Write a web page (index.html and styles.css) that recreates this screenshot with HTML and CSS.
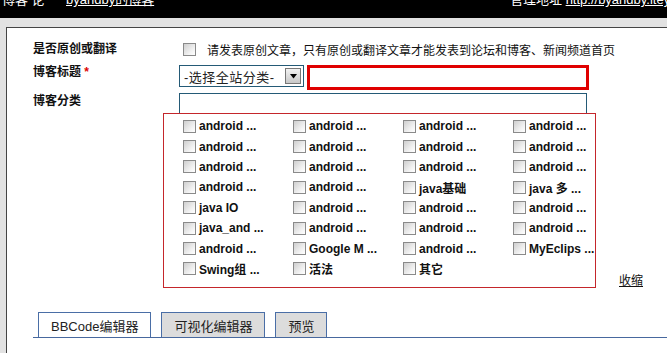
FILE: index.html
```html
<!DOCTYPE html>
<html lang="zh-CN">
<head>
  <meta charset="UTF-8" />
  <meta name="viewport" content="width=device-width, initial-scale=1.0"/>
  <title>发表博客 | ITeye</title>
  <link rel="stylesheet" href="styles.css">
</head>
<body>

<div class="topbar">
  <div class="topbar-inner">
    <div class="top-left">
      <span class="top-site">博客 论</span>
      <a class="top-link" href="#">byandby的博客</a>
    </div>
    <span class="top-admin">管理地址 <a href="#">http://byandby.iteye.com</a></span>
  </div>
</div>

<div class="page">
  <div class="content">

    <div class="row row-original">
      <div class="label">是否原创或翻译</div>
      <input type="checkbox" class="cb" />
      <span class="hint">请发表原创文章，只有原创或翻译文章才能发表到论坛和博客、新闻频道首页</span>
    </div>

    <div class="row row-title">
      <div class="label">博客标题 <span class="req">*</span></div>
      <div class="select">
        <span class="select-text">-选择全站分类-</span>
        <span class="select-btn"><svg width="9" height="5" viewBox="0 0 9 5"><path d="M1 0H8L4.5 4.5Z" fill="#000"/></svg></span>
      </div>
      <input type="text" class="title-input" />
    </div>

    <div class="row row-cat">
      <div class="label">博客分类</div>
      <input type="text" class="cat-input" />
    </div>

    <div class="cat-wrap">
      <div class="cat-box" id="cat-box"></div>
      <a class="collapse" href="#">收缩</a>
    </div>

    <div class="tabs">
      <span class="tab active">BBCode编辑器</span>
      <span class="tab">可视化编辑器</span>
      <span class="tab">预览</span>
    </div>

    <div class="toolbar" id="toolbar"></div>

  </div>
</div>

<script>
  const cats = [
    'android ...', 'android ...', 'android ...', 'android ...',
    'android ...', 'android ...', 'android ...', 'android ...',
    'android ...', 'android ...', 'android ...', 'android ...',
    'android ...', 'android ...', 'java基础', 'java 多 ...',
    'java IO', 'android ...', 'android ...', 'android ...',
    'java_and ...', 'android ...', 'android ...', 'android ...',
    'android ...', 'Google M ...', 'android ...', 'MyEclips ...',
    'Swing组 ...', '活法', '其它'
  ];

  const box = document.getElementById('cat-box');
  cats.forEach(c => {
    box.innerHTML += `
      <label class="cat-item"><input type="checkbox" class="cb" /><span>${c}</span></label>`;
  });

  const widths = [23, 27, 32, 57, 51, 43, 44, 47, 53, 54];
  const bar = document.getElementById('toolbar');
  widths.forEach(w => {
    bar.innerHTML += `<span class="tool" style="width:${w}px"></span>`;
  });
</script>

</body>
</html>
```

FILE: styles.css
```css
body {
  margin: 0;
  font-family: "Liberation Sans", "Noto Sans CJK SC", sans-serif;
  font-size: 12px;
  color: #222;
  background: #e2e2e2;
  overflow: hidden;
}
.topbar {
  height: 18px;
  background: #000;
  overflow: hidden;
  color: #fff;
}
.topbar-inner {
  display: flex;
  align-items: baseline;
  margin-top: -8px;
  line-height: 16px;
  font-size: 13px;
  white-space: nowrap;
}
.topbar a {
  color: #fff;
}
.top-left {
  display: flex;
  width: 510px;
  flex-shrink: 0;
}
.top-site {
  width: 64px;
  padding-left: 2px;
}
.top-admin {
  flex-shrink: 0;
}
.page {
  padding: 9px 0 0 6px;
}
.content {
  background: #fff;
  border-top: 1px solid #444;
  border-left: 1px solid #444;
  padding: 12px 0 0 26px;
  height: 400px;
}
.row {
  display: flex;
  align-items: flex-start;
}
.label {
  width: 146px;
  flex-shrink: 0;
  font-weight: bold;
  line-height: 16px;
  color: #111;
}
.req {
  color: #d00;
}
.cb {
  appearance: none;
  -webkit-appearance: none;
  width: 13px;
  height: 13px;
  margin: 0;
  border: 1px solid #8a8a8a;
  background: linear-gradient(135deg, #cfcfcf, #f4f4f4 70%, #fff);
  box-sizing: border-box;
  flex-shrink: 0;
}
.row-original {
  height: 19px;
  align-items: center;
}
.row-original .label {
  margin-top: -1px;
}
.row-original .cb {
  margin-left: 4px;
}
.hint {
  margin-left: 11px;
  color: #111;
  white-space: nowrap;
}
.row-title {
  margin-top: 5px;
  height: 26px;
}
.select {
  display: flex;
  align-items: center;
  width: 125px;
  height: 22px;
  margin-top: 1px;
  border: 1px solid #245a76;
  box-sizing: border-box;
  padding-left: 4px;
}
.select-text {
  font-size: 13px;
  letter-spacing: 0.5px;
  flex: 1;
}
.select-btn {
  display: flex;
  align-items: center;
  justify-content: center;
  width: 16px;
  height: 16px;
  margin-right: 2px;
  border: 1px solid #777;
  background: linear-gradient(#f2f2f2, #c8c8c8);
  box-sizing: border-box;
}
.title-input {
  width: 282px;
  height: 25px;
  margin: 1px 0 0 3px;
  border: 3px solid #e00000;
  box-sizing: border-box;
  padding: 0;
}
.row-cat {
  margin-top: 3px;
}
.cat-input {
  width: 408px;
  height: 21px;
  margin: 0;
  border: 1px solid #245a76;
  box-sizing: border-box;
  padding: 0;
}
.cat-wrap {
  display: flex;
  align-items: flex-end;
  margin: -1px 0 0 130px;
}
.cat-box {
  width: 433px;
  height: 175px;
  border: 1px solid #c4262b;
  box-sizing: border-box;
  padding: 2px 0 0 19px;
  display: grid;
  grid-template-columns: repeat(4, 110px);
  grid-auto-rows: 20.4px;
  align-content: start;
}
.cat-item {
  display: flex;
  align-items: center;
  font-weight: bold;
  color: #111;
  white-space: nowrap;
}
.cat-item .cb {
  margin-right: 3px;
}
.collapse {
  margin: 0 0 0 23px;
  color: #111;
}
.tabs {
  display: flex;
  gap: 10px;
  margin-top: 24px;
  padding-left: 5px;
  height: 25px;
  border-bottom: 1px solid #47689e;
}
.tab {
  display: flex;
  align-items: center;
  padding: 0 12px;
  border: 1px solid #4a6ea6;
  border-bottom: none;
  background: #dcdcdc;
  color: #222;
  font-size: 13px;
}
.tab.active {
  background: #fff;
}
.toolbar {
  display: flex;
  margin: 10px 0 0 162px;
  height: 12px;
}
.tool {
  height: 8px;
  border-top: 1px solid #ddd;
  border-right: 1px solid #555;
  margin-top: 5px;
  box-sizing: border-box;
}
```
